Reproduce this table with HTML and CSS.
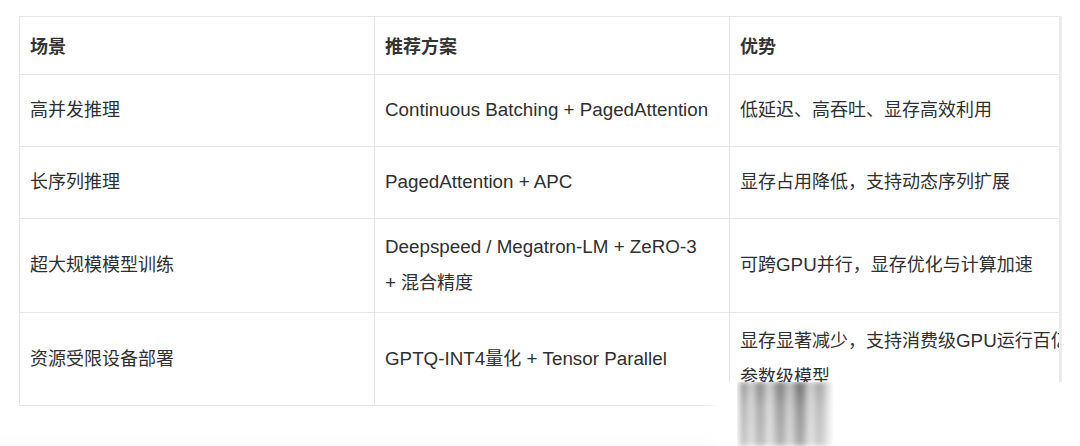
FILE: index.html
```html
<!DOCTYPE html>
<html lang="zh-CN">
<head>
<meta charset="utf-8">
<title>推荐方案</title>
<link rel="stylesheet" href="styles.css">
</head>
<body>
<div class="page">
  <div class="scroller">
    <table class="grid">
      <colgroup>
        <col class="c1"><col class="c2"><col class="c3">
      </colgroup>
      <thead>
        <tr class="head"><th>场景</th><th>推荐方案</th><th>优势</th></tr>
      </thead>
      <tbody>
        <tr><td>高并发推理</td><td><span class="lat">Continuous Batching + PagedAttention</span></td><td>低延迟、高吞吐、显存高效利用</td></tr>
        <tr><td>长序列推理</td><td><span class="lat">PagedAttention + APC</span></td><td>显存占用降低，支持动态序列扩展</td></tr>
        <tr class="tall"><td>超大规模模型训练</td><td><span class="lat">Deepspeed / Megatron-LM + ZeRO-3</span><br><span class="lat">+</span> 混合精度</td><td>可跨<span class="lat">GPU</span>并行，显存优化与计算加速</td></tr>
        <tr class="tall last"><td>资源受限设备部署</td><td><span class="lat">GPTQ-INT4</span>量化<span class="lat"> + Tensor Parallel</span></td><td>显存显著减少，支持消费级<span class="lat">GPU</span>运行百亿<br>参数级模型</td></tr>
      </tbody>
    </table>
  </div>
  <div class="fade" aria-hidden="true"></div>
  <div class="smudge" aria-hidden="true"></div>
</div>
</body>
</html>
```
FILE: styles.css
```css
html, body {
  margin: 0;
  padding: 0;
  background: #ffffff;
}
body {
  width: 1080px;
  height: 446px;
  overflow: hidden;
  font-family: "Liberation Sans", "Noto Sans CJK SC", sans-serif;
  color: #2f2f2f;
}
.page {
  position: relative;
  width: 1080px;
  height: 446px;
  padding-top: 16px;
  box-sizing: border-box;
  background: linear-gradient(to bottom, #ffffff 0, #ffffff 430px, #fcfcfc 446px);
}
.scroller {
  margin-left: 19px;
  width: 1040px;
  overflow: hidden;
  border-right: 3px solid #ebebeb;
}
.grid {
  border-collapse: collapse;
  table-layout: fixed;
  width: 1120px;
  font-size: 18px;
  background: #ffffff;
}
.c1 { width: 355px; }
.c2 { width: 355px; }
.c3 { width: 410px; }
.grid th,
.grid td {
  border: 1px solid #e5e5e5;
  padding: 10px 10px 11px;
  line-height: 36px;
  text-align: left;
  vertical-align: middle;
  white-space: nowrap;
}
.grid th {
  font-weight: bold;
  color: #333333;
  padding-top: 12px;
  padding-bottom: 9px;
}
.grid tr.head { height: 57px; }
.grid tbody tr { height: 72px; }
.grid tr.last td { padding-bottom: 10px; }
.lat {
  font-size: 18.8px;
}
.fade {
  position: absolute;
  left: 700px;
  top: 382px;
  width: 380px;
  height: 64px;
  background: linear-gradient(to right, rgba(255,255,255,0) 0, #ffffff 22px, #ffffff 100%);
}
.smudge {
  position: absolute;
  left: 737px;
  top: 382px;
  width: 96px;
  height: 64px;
  background: linear-gradient(to right,
    rgba(90,90,90,0) 0,
    rgba(90,90,90,0.7) 6%,
    rgba(150,150,150,0.45) 15%,
    rgba(80,80,80,0.75) 24%,
    rgba(160,160,160,0.45) 34%,
    rgba(70,70,70,0.8) 45%,
    rgba(140,140,140,0.5) 55%,
    rgba(60,60,60,0.85) 66%,
    rgba(160,160,160,0.45) 76%,
    rgba(100,100,100,0.65) 86%,
    rgba(150,150,150,0) 100%);
  filter: blur(2.5px);
  -webkit-mask-image: linear-gradient(to bottom, rgba(0,0,0,0.95) 0, rgba(0,0,0,0.7) 40%, rgba(0,0,0,0.55) 100%);
  mask-image: linear-gradient(to bottom, rgba(0,0,0,0.95) 0, rgba(0,0,0,0.7) 40%, rgba(0,0,0,0.55) 100%);
}
```
